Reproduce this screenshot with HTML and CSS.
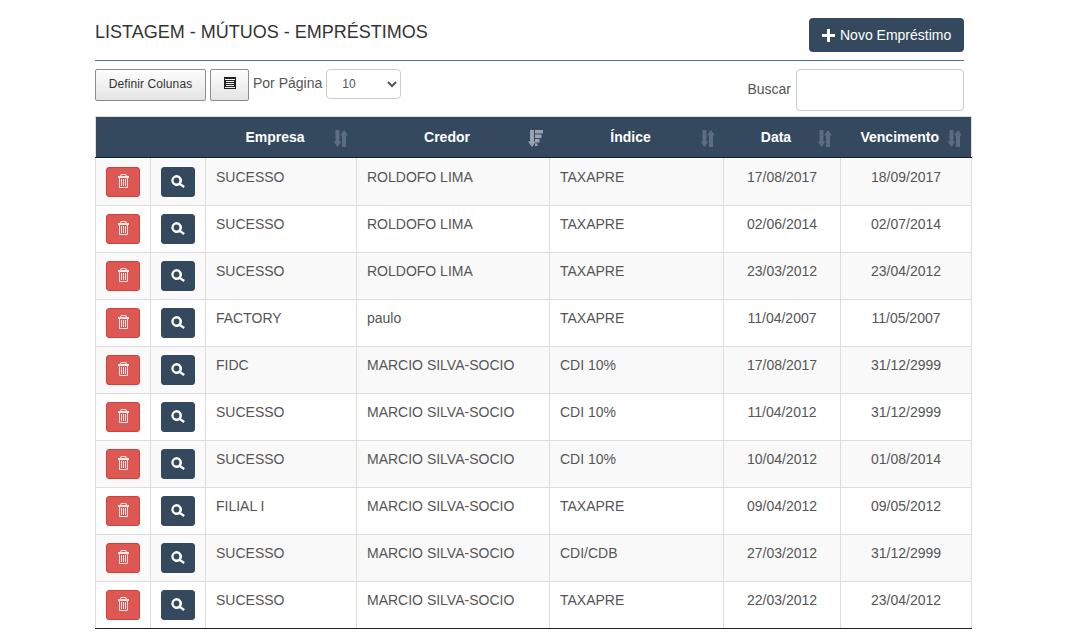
FILE: index.html
```html
<!DOCTYPE html>
<html lang="pt">
<head>
<meta charset="utf-8">
<title>Listagem - Mútuos - Empréstimos</title>
<link rel="stylesheet" href="styles.css">
</head>
<body>
<svg class="defs" width="0" height="0">
  <defs>
    <symbol id="i-trash" viewBox="0 0 11 14">
      <path fill="currentColor" fill-rule="evenodd" d="M3 0h5l1 2h2v2h-1v9a1 1 0 0 1-1 1H2a1 1 0 0 1-1-1V4H0V2h2zM3.600 1l-.4 1h4.600l-.4-1zM2 4v9h7V4zM3 5h1v7H3zM5 5h1v7H5zM7 5h1v7H7z"/>
    </symbol>
    <symbol id="i-search" viewBox="0 0 14 13">
      <path fill="currentColor" fill-rule="evenodd" d="M5.500 0a5.500 5.500 0 0 1 4.600 8.500l3.800 2.600-1.400 1.900-3.800-2.800A5.500 5.500 0 1 1 5.500 0zM5.500 2.600a2.900 2.900 0 1 0 0 5.800 2.900 2.900 0 0 0 0-5.800z"/>
    </symbol>
    <symbol id="i-sort" viewBox="0 0 15 17">
      <path fill="currentColor" d="M2.500 0h4v11.500h2L4.500 17 .5 11.500h2zM11 0l4 5.500h-2V17H9V5.500H7z"/>
    </symbol>
    <symbol id="i-sort-desc" viewBox="0 0 16 17">
      <path fill="currentColor" d="M3 0h4v11.500h2L5 17 1 11.500h2zM8 0h8v3.500H8zM8 4.500h6.500V8H8zM8 9h4.500v3.500H8zM8 13.500h2.500V16H8z"/>
    </symbol>
    <symbol id="i-list" viewBox="0 0 12 12">
      <path fill="currentColor" fill-rule="evenodd" d="M0 0h12v12H0zM1 2v1h10V2zM2 4v1h8V4zM2 6v1h8V6zM2 8v1h8V8zM1 10v1h10v-1z"/>
    </symbol>
  </defs>
</svg>
<main class="page">
  <header class="top">
    <h1 class="title">LISTAGEM - MÚTUOS - EMPRÉSTIMOS</h1>
    <button class="btn-new" type="button">
      <svg class="icon-plus" viewBox="0 0 13 13" aria-hidden="true"><path fill="currentColor" d="M5 0h3v5h5v3H8v5H5V8H0V5h5z"/></svg>
      Novo Empréstimo
    </button>
  </header>
  <div class="toolbar">
    <div class="tools-left">
      <button class="btn-tool btn-cols" type="button">Definir Colunas</button>
      <button class="btn-tool btn-icon" type="button"><svg class="icon-list"><use href="#i-list"/></svg></button>
      <label class="per-page-label" for="per-page">Por Página</label>
      <select class="per-page" id="per-page"><option>10</option><option>25</option><option>50</option></select>
    </div>
    <div class="tools-right">
      <label class="search-label" for="search">Buscar</label>
      <input class="search" id="search" type="text">
    </div>
  </div>
  <table class="grid">
    <colgroup>
      <col class="c-act"><col class="c-act"><col class="c-emp"><col class="c-cre"><col class="c-ind"><col class="c-dat"><col class="c-ven">
    </colgroup>
    <thead>
      <tr>
        <th class="blank"></th>
        <th class="blank"></th>
        <th>Empresa<svg class="sort"><use href="#i-sort"/></svg></th>
        <th>Credor<svg class="sort active"><use href="#i-sort-desc"/></svg></th>
        <th>Índice<svg class="sort"><use href="#i-sort"/></svg></th>
        <th>Data<svg class="sort"><use href="#i-sort"/></svg></th>
        <th>Vencimento<svg class="sort"><use href="#i-sort"/></svg></th>
      </tr>
    </thead>
    <tbody>
      <tr><td><button class="act del" type="button"><svg class="i-t"><use href="#i-trash"/></svg></button></td><td><button class="act view" type="button"><svg class="i-s"><use href="#i-search"/></svg></button></td><td>SUCESSO</td><td>ROLDOFO LIMA</td><td>TAXAPRE</td><td class="date">17/08/2017</td><td class="date">18/09/2017</td></tr>
      <tr><td><button class="act del" type="button"><svg class="i-t"><use href="#i-trash"/></svg></button></td><td><button class="act view" type="button"><svg class="i-s"><use href="#i-search"/></svg></button></td><td>SUCESSO</td><td>ROLDOFO LIMA</td><td>TAXAPRE</td><td class="date">02/06/2014</td><td class="date">02/07/2014</td></tr>
      <tr><td><button class="act del" type="button"><svg class="i-t"><use href="#i-trash"/></svg></button></td><td><button class="act view" type="button"><svg class="i-s"><use href="#i-search"/></svg></button></td><td>SUCESSO</td><td>ROLDOFO LIMA</td><td>TAXAPRE</td><td class="date">23/03/2012</td><td class="date">23/04/2012</td></tr>
      <tr><td><button class="act del" type="button"><svg class="i-t"><use href="#i-trash"/></svg></button></td><td><button class="act view" type="button"><svg class="i-s"><use href="#i-search"/></svg></button></td><td>FACTORY</td><td>paulo</td><td>TAXAPRE</td><td class="date">11/04/2007</td><td class="date">11/05/2007</td></tr>
      <tr><td><button class="act del" type="button"><svg class="i-t"><use href="#i-trash"/></svg></button></td><td><button class="act view" type="button"><svg class="i-s"><use href="#i-search"/></svg></button></td><td>FIDC</td><td>MARCIO SILVA-SOCIO</td><td>CDI 10%</td><td class="date">17/08/2017</td><td class="date">31/12/2999</td></tr>
      <tr><td><button class="act del" type="button"><svg class="i-t"><use href="#i-trash"/></svg></button></td><td><button class="act view" type="button"><svg class="i-s"><use href="#i-search"/></svg></button></td><td>SUCESSO</td><td>MARCIO SILVA-SOCIO</td><td>CDI 10%</td><td class="date">11/04/2012</td><td class="date">31/12/2999</td></tr>
      <tr><td><button class="act del" type="button"><svg class="i-t"><use href="#i-trash"/></svg></button></td><td><button class="act view" type="button"><svg class="i-s"><use href="#i-search"/></svg></button></td><td>SUCESSO</td><td>MARCIO SILVA-SOCIO</td><td>CDI 10%</td><td class="date">10/04/2012</td><td class="date">01/08/2014</td></tr>
      <tr><td><button class="act del" type="button"><svg class="i-t"><use href="#i-trash"/></svg></button></td><td><button class="act view" type="button"><svg class="i-s"><use href="#i-search"/></svg></button></td><td>FILIAL I</td><td>MARCIO SILVA-SOCIO</td><td>TAXAPRE</td><td class="date">09/04/2012</td><td class="date">09/05/2012</td></tr>
      <tr><td><button class="act del" type="button"><svg class="i-t"><use href="#i-trash"/></svg></button></td><td><button class="act view" type="button"><svg class="i-s"><use href="#i-search"/></svg></button></td><td>SUCESSO</td><td>MARCIO SILVA-SOCIO</td><td>CDI/CDB</td><td class="date">27/03/2012</td><td class="date">31/12/2999</td></tr>
      <tr><td><button class="act del" type="button"><svg class="i-t"><use href="#i-trash"/></svg></button></td><td><button class="act view" type="button"><svg class="i-s"><use href="#i-search"/></svg></button></td><td>SUCESSO</td><td>MARCIO SILVA-SOCIO</td><td>TAXAPRE</td><td class="date">22/03/2012</td><td class="date">23/04/2012</td></tr>
    </tbody>
  </table>
</main>
</body>
</html>
```

FILE: styles.css
```css
* { box-sizing: border-box; }

html, body { margin: 0; background: #fff; }

body {
  font-family: "Liberation Sans", Arial, sans-serif;
  font-size: 14px;
  line-height: 20px;
  color: #555;
}

.defs { display: block; height: 0; }

.page {
  width: 869px;
  margin-left: 95px;
  padding-top: 18px;
}

.top {
  display: flex;
  justify-content: space-between;
  align-items: flex-start;
  height: 43px;
  border-bottom: 1px solid #4a6ea5;
}

.title {
  margin: 3px 0 0;
  font-size: 18px;
  line-height: 22px;
  font-weight: 400;
  color: #333;
}

.btn-new {
  display: flex;
  align-items: center;
  gap: 5px;
  width: 155px;
  height: 34px;
  padding: 0 12px 0 13px;
  border: 0;
  border-radius: 4px;
  background: #34495e;
  color: #fff;
  font: 14px/20px "Liberation Sans", Arial, sans-serif;
  white-space: nowrap;
}

.icon-plus { width: 13px; height: 13px; flex: none; }

.toolbar {
  display: flex;
  justify-content: space-between;
  align-items: flex-start;
  margin-top: 8px;
  height: 42px;
}

.tools-left { display: flex; align-items: flex-start; }

.btn-tool {
  height: 32px;
  border: 1px solid #8e8e8e;
  border-radius: 2px;
  background: linear-gradient(#fdfdfd, #e4e4e4);
  color: #333;
  font: 12px/16px "Liberation Sans", Arial, sans-serif;
  letter-spacing: 0.1px;
  padding: 0;
}

.btn-cols { width: 111px; padding-bottom: 3px; }

.btn-icon {
  width: 39px;
  margin-left: 4px;
  display: flex;
  justify-content: center;
  padding-top: 7px;
}

.icon-list { width: 12px; height: 12px; color: #222; }

.per-page-label { margin: 4px 4px 0 4px; line-height: 20px; }

.per-page {
  width: 75px;
  height: 30px;
  padding: 0 11px;
  border: 1px solid #ccc;
  border-radius: 4px;
  background: #fff;
  color: #555;
  font: 12px "Liberation Sans", Arial, sans-serif;
}

.tools-right { display: flex; align-items: center; height: 42px; padding-bottom: 2px; }

.search-label { margin-right: 5px; }

.search {
  width: 168px;
  height: 42px;
  margin-bottom: -2px;
  border: 1px solid #ccc;
  border-radius: 4px;
  background: #fff;
}

.grid {
  width: 877px;
  margin-top: 5px;
  border-collapse: collapse;
  table-layout: fixed;
  border: 1px solid #ddd;
}

.c-act { width: 55px; }
.c-emp { width: 151px; }
.c-cre { width: 193px; }
.c-ind { width: 174px; }
.c-dat { width: 117px; }
.c-ven { width: 131px; }

.grid thead tr { height: 41px; }

.grid th {
  position: relative;
  padding: 0 22px 0 10px;
  background: #34495e;
  color: #fff;
  font-weight: 700;
  text-align: center;
  border-bottom: 1px solid #16202b;
  white-space: nowrap;
}

.sort {
  position: absolute;
  top: 13px;
  right: 9px;
  width: 15px;
  height: 17px;
  color: rgba(255, 255, 255, 0.2);
}

.sort.active { color: rgba(255, 255, 255, 0.5); right: 7px; width: 16px; }

.grid tbody tr:nth-child(odd) { background: #f9f9f9; }

.grid td {
  padding: 8px 10px;
  vertical-align: top;
  border: 1px solid #ddd;
}

.grid tbody tr:first-child td { padding-top: 9px; }

.grid tbody tr:last-child td { border-bottom-color: #222; }

.grid td.date { text-align: center; }

.act {
  display: flex;
  align-items: center;
  justify-content: center;
  width: 34px;
  height: 30px;
  padding: 0;
  border: 1px solid transparent;
  border-radius: 3px;
  color: #fff;
}

.del { background: #dd5753; border-color: #d43f3a; color: #fbe9e8; }
.view { background: #34495e; border-color: #34495e; }

.i-t { width: 11px; height: 14px; margin: 0 0 2px 1px; }
.i-s { width: 14px; height: 13px; margin-bottom: 1px; }
```
